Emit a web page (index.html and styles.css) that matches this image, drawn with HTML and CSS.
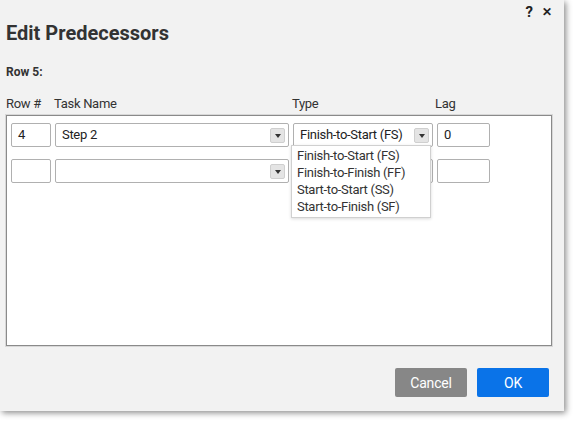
FILE: index.html
```html
<!DOCTYPE html>
<html>
<head>
<meta charset="utf-8">
<link rel="stylesheet" href="styles.css">
</head>
<body>
<div class="dialog">
  <div class="topbar">
    <span class="tb-btn">?</span>
    <span class="tb-btn close">&#x2715;</span>
  </div>
  <h1 class="title">Edit Predecessors</h1>
  <div class="rowlabel">Row 5:</div>
  <div class="headers">
    <span>Row #</span>
    <span>Task Name</span>
    <span>Type</span>
    <span>Lag</span>
  </div>
  <div class="panel">
    <div class="grow">
      <div class="input c-row">4</div>
      <div class="input select c-task"><span>Step 2</span><span class="arrow"></span></div>
      <div class="cell-type">
        <div class="input select c-type"><span>Finish-to-Start (FS)</span><span class="arrow"></span></div>
        <ul class="menu">
          <li>Finish-to-Start (FS)</li>
          <li>Finish-to-Finish (FF)</li>
          <li>Start-to-Start (SS)</li>
          <li>Start-to-Finish (SF)</li>
        </ul>
      </div>
      <div class="input c-lag">0</div>
    </div>
    <div class="grow">
      <div class="input c-row"></div>
      <div class="input select c-task"><span></span><span class="arrow"></span></div>
      <div class="cell-type">
        <div class="input select c-type"><span></span><span class="arrow"></span></div>
      </div>
      <div class="input c-lag"></div>
    </div>
  </div>
  <div class="footer">
    <button class="btn cancel">Cancel</button>
    <button class="btn ok">OK</button>
  </div>
</div>
</body>
</html>
```
FILE: styles.css
```css
* { box-sizing: border-box; }
html, body { margin: 0; padding: 0; background: #ffffff; }
body {
  font-family: Roboto, "Liberation Sans", Arial, sans-serif;
  color: #333;
  width: 576px;
  height: 421px;
  overflow: hidden;
}
.dialog {
  width: 564px;
  height: 411px;
  background: #f2f2f2;
  box-shadow: 2px 2px 6px rgba(0,0,0,0.45);
  padding: 0 15px 0 6px;
  display: flex;
  flex-direction: column;
}
.topbar {
  height: 20px;
  display: flex;
  justify-content: flex-end;
  align-items: flex-end;
  gap: 9px;
  margin-right: -15px;
  padding-right: 12px;
}
.tb-btn {
  font-size: 15px;
  font-weight: 700;
  color: #222;
  line-height: 16px;
}
.tb-btn.close { font-size: 12px; font-weight: 700; line-height: 15px; }
.title {
  margin: 1px 0 0 0;
  font-size: 20px;
  font-weight: 700;
  line-height: 24px;
  color: #333;
}
.rowlabel {
  margin-top: 20px;
  font-size: 12px;
  font-weight: 700;
  line-height: 14px;
  color: #333;
}
.headers {
  margin-top: 17px;
  display: grid;
  grid-template-columns: 48px 238px 143px auto;
  font-size: 13px;
  line-height: 15px;
  letter-spacing: -0.3px;
  color: #333;
}
.panel {
  margin-top: 4px;
  width: 546px;
  height: 231px;
  background: #fff;
  border: 1px solid #8a8a8a;
  box-shadow: 0 0 0 1px #d8d8d8;
  padding: 7px 4px;
  display: flex;
  flex-direction: column;
  gap: 12px;
}
.grow {
  display: flex;
  gap: 4px;
  height: 24px;
}
.input {
  height: 24px;
  background: #fff;
  border: 1px solid #b0b0b0;
  border-radius: 2px;
  font-size: 13px;
  line-height: 22px;
  letter-spacing: -0.3px;
  padding: 0 6px;
  color: #222;
  display: flex;
  align-items: center;
}
.c-row { width: 40px; }
.c-task { width: 234px; }
.c-type { width: 140px; }
.c-lag { width: 53px; }
.select { justify-content: space-between; padding-right: 3px; }
.arrow {
  width: 15px;
  height: 15px;
  background: #e4e4e4;
  border: 1px solid #cfcfcf;
  border-radius: 2px;
  display: flex;
  align-items: center;
  justify-content: center;
}
.arrow::after {
  content: "";
  border-left: 3px solid transparent;
  border-right: 3px solid transparent;
  border-top: 4px solid #333;
  margin-top: 1px;
}
.cell-type { position: relative; }
.menu {
  position: absolute;
  left: -2px;
  top: 22px;
  width: 140px;
  margin: 0;
  padding: 1px 0 2px 0;
  list-style: none;
  background: #fff;
  border: 1px solid #d0d0d0;
  box-shadow: 0 1px 3px rgba(0,0,0,0.15);
  z-index: 5;
}
.menu li {
  font-size: 13px;
  line-height: 17px;
  letter-spacing: -0.3px;
  padding-left: 5px;
  color: #333;
  white-space: nowrap;
}
.footer {
  margin-top: 22px;
  display: flex;
  justify-content: flex-end;
  gap: 10px;
}
.btn {
  width: 72px;
  height: 29px;
  border: none;
  border-radius: 2px;
  font-family: Roboto, "Liberation Sans", Arial, sans-serif;
  font-size: 14px;
  letter-spacing: -0.2px;
  color: #fff;
  padding: 0;
}
.cancel { background: #878787; }
.ok { background: #0a73e8; }
```
